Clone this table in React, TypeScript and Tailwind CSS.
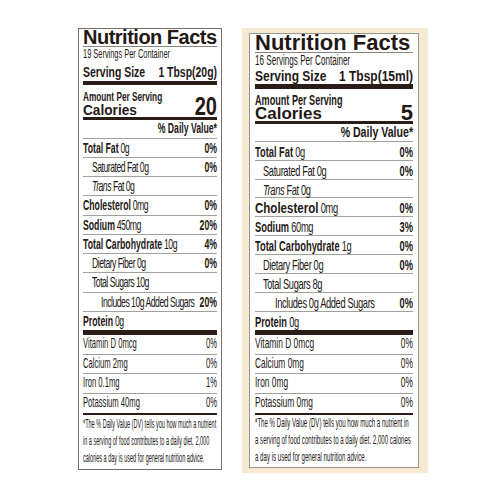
import type { ReactNode } from "react"

const FONT = "font-['Liberation_Sans',Arial,Helvetica,sans-serif]"

// widened box + horizontal squeeze, so Arial reads like a condensed face
const K = {
  s425: "w-[235.29%] scale-x-[0.425]",
  s47: "w-[212.77%] scale-x-[0.47]",
  s51: "w-[196.08%] scale-x-[0.51]",
  s55: "w-[181.82%] scale-x-[0.55]",
  s56: "w-[178.57%] scale-x-[0.56]",
  s58: "w-[172.41%] scale-x-[0.58]",
  s61: "w-[163.93%] scale-x-[0.61]",
  s62: "w-[161.29%] scale-x-[0.62]",
  s65: "w-[153.85%] scale-x-[0.65]",
  s72: "w-[138.89%] scale-x-[0.72]",
  s73: "w-[136.99%] scale-x-[0.73]",
  s80: "w-[125%] scale-x-[0.8]",
  s91: "w-[109.89%] scale-x-[0.91]",
  s106: "w-[94.34%] scale-x-[1.06]",
  one: "w-full",
}

type Row = {
  name: string
  amt?: string
  dv?: string
  bold?: boolean
  indent?: 0 | 1 | 2
  italic?: string
  nameCls?: string
}

type Cfg = {
  box: string
  title: string
  servings: string
  servingsK: string
  size: string
  sizeK: string
  bar1: string
  amount: string
  amountK: string
  cal: string
  calK: string
  num: string
  numK: string
  dv: string
  dvK: string
  row: string
  rowK: string
  reg: string
  in1: string
  in2: string
  vit: string
  vitK: string
  foot: string
  footK: string
}

function Sq({ k, className = "", children }: { k: string; className?: string; children: ReactNode }) {
  return (
    <div className={className}>
      <div className={`origin-left whitespace-nowrap ${k}`}>{children}</div>
    </div>
  )
}

function Label({
  c,
  servings,
  serving,
  calories,
  rows,
  vitamins,
  foot,
}: {
  c: Cfg
  servings: string
  serving: string
  calories: string
  rows: Row[]
  vitamins: [string, string][]
  foot: string[]
}) {
  return (
    <div className={`flex flex-col bg-white ${c.box}`}>
      <div className={`font-bold whitespace-nowrap ${c.title}`}>Nutrition Facts</div>
      <div className="h-px bg-[#8a8480]" />
      <Sq k={c.servingsK} className={c.servings}>
        {servings}
      </Sq>
      <Sq k={c.sizeK} className={`font-bold ${c.size}`}>
        <div className="flex justify-between">
          <span>Serving Size</span>
          <span>{serving}</span>
        </div>
      </Sq>
      <div className={`bg-[#2a1d18] ${c.bar1}`} />

      {/* amount per serving + calories */}
      <div className="flex h-[32px] items-end">
        <div className="min-w-0 flex-1 self-start">
          <Sq k={c.amountK} className={`font-bold ${c.amount}`}>
            Amount Per Serving
          </Sq>
          <Sq k={c.calK} className={`font-bold ${c.cal}`}>
            Calories
          </Sq>
        </div>
        <Sq k={c.numK} className={`shrink-0 text-right font-bold ${c.num}`}>
          {calories}
        </Sq>
      </div>
      <div className="h-[3px] bg-[#2a1d18]" />

      <Sq k={c.dvK} className={`text-right font-bold ${c.dv}`}>
        % Daily Value*
      </Sq>

      {rows.map((r) => (
        <Sq
          key={r.name}
          k={c.rowK}
          className={`border-t border-[#a39f9c] ${c.row} ${r.indent === 1 ? c.in1 : r.indent === 2 ? c.in2 : ""}`}
        >
          <div className="flex justify-between">
            <span>
              {r.italic && <span className={`italic ${c.reg}`}>{r.italic} </span>}
              {r.bold ? (
                <span className={`font-bold ${r.nameCls ?? ""}`}>{r.name}</span>
              ) : (
                <span className={c.reg}>{r.name}</span>
              )}
              {r.amt && <span className={c.reg}> {r.amt}</span>}
            </span>
            {r.dv && <span className="font-bold">{r.dv}</span>}
          </div>
        </Sq>
      ))}

      <div className="h-[5px] bg-[#2a1d18]" />
      {vitamins.map(([n, v], i) => (
        <Sq
          key={n}
          k={c.vitK}
          className={`${c.vit} ${i < vitamins.length - 1 ? "border-b border-[#a39f9c]" : ""}`}
        >
          <div className="flex justify-between">
            <span>{n}</span>
            <span>{v}</span>
          </div>
        </Sq>
      ))}
      <div className="h-[2px] bg-[#2a1d18]" />
      <Sq k={c.footK} className={`flex-1 ${c.foot}`}>
        {foot.map((l) => (
          <div key={l}>{l}</div>
        ))}
      </Sq>
    </div>
  )
}

const left: Cfg = {
  box: "h-[442px] w-[144px] border border-[#776e69] px-[4px]",
  title: "h-[17px] text-[20px] leading-[17px] tracking-[-0.5px]",
  servings: "h-[14px] text-[13.5px] leading-[14px]",
  servingsK: K.s55,
  size: "h-[20px] text-[14.5px] leading-[22px]",
  sizeK: K.s72,
  bar1: "h-[4px]",
  amount: "h-[20px] text-[13.5px] leading-[23px]",
  amountK: K.s61,
  cal: "h-[12px] text-[15px] leading-[10px]",
  calK: K.s91,
  num: "w-[25px] text-[25px] leading-[21px]",
  numK: K.s80,
  dv: "h-[17.5px] text-[14px] leading-[17.5px]",
  dvK: K.s62,
  row: "h-[19.25px] text-[15px] leading-[18.25px]",
  rowK: K.s58,
  reg: "tracking-[-0.9px]",
  in1: "pl-[9px]",
  in2: "pl-[18px]",
  vit: "h-[19.6px] text-[15px] leading-[15.5px]",
  vitK: K.s51,
  foot: "text-[13px] leading-[17px]",
  footK: K.s425,
}

const right: Cfg = {
  box: "h-[435px] w-[170px] border border-[#9a948e] px-[5px]",
  title: "h-[18px] text-[22px] leading-[18px]",
  servings: "h-[14px] text-[14px] leading-[14px]",
  servingsK: K.s58,
  size: "h-[17px] text-[15px] leading-[17.5px]",
  sizeK: K.s80,
  bar1: "h-[5px]",
  amount: "h-[20px] text-[14px] leading-[23px]",
  amountK: K.s65,
  cal: "h-[12px] text-[16px] leading-[10px]",
  calK: K.s106,
  num: "w-[14px] text-[22px] leading-[17px]",
  numK: K.one,
  dv: "h-[16.7px] text-[14.5px] leading-[16.7px]",
  dvK: K.s73,
  row: "h-[18.93px] text-[15px] leading-[20px]",
  rowK: K.s62,
  reg: "tracking-[-0.6px]",
  in1: "pl-[8px]",
  in2: "pl-[20px]",
  vit: "h-[19.6px] text-[15px] leading-[16px]",
  vitK: K.s56,
  foot: "text-[13px] leading-[16.7px]",
  footK: K.s47,
}

export default function App() {
  return (
    <div className={`flex h-[500px] w-[500px] items-start gap-[20px] bg-white pl-[78px] pt-[28px] text-[#231815] ${FONT}`}>
      <Label
        c={left}
        servings="19 Servings Per Container"
        serving="1 Tbsp(20g)"
        calories="20"
        rows={[
          { name: "Total Fat", amt: "0g", dv: "0%", bold: true },
          { name: "Saturated Fat 0g", dv: "0%", indent: 1 },
          { name: "Fat 0g", italic: "Trans", indent: 1 },
          { name: "Cholesterol", amt: "0mg", dv: "0%", bold: true },
          { name: "Sodium", amt: "450mg", dv: "20%", bold: true },
          { name: "Total Carbohydrate", amt: "10g", dv: "4%", bold: true },
          { name: "Dietary Fiber 0g", dv: "0%", indent: 1 },
          { name: "Total Sugars 10g", indent: 1 },
          { name: "Includes 10g Added Sugars", dv: "20%", indent: 2 },
          { name: "Protein", amt: "0g", bold: true },
        ]}
        vitamins={[
          ["Vitamin D 0mcg", "0%"],
          ["Calcium 2mg", "0%"],
          ["Iron 0.1mg", "1%"],
          ["Potassium 40mg", "0%"],
        ]}
        foot={[
          "*The % Daily Value (DV) tells you how much a nutrient",
          "in a serving of food contributes to a daily diet. 2,000",
          "calories a day is used for general nutrition advice.",
        ]}
      />

      <div className="h-[445px] w-[186px] bg-[#f6ead3] pl-[7px] pt-[5px]">
        <Label
          c={right}
          servings="16 Servings Per Container"
          serving="1 Tbsp(15ml)"
          calories="5"
          rows={[
            { name: "Total Fat", amt: "0g", dv: "0%", bold: true },
            { name: "Saturated Fat 0g", dv: "0%", indent: 1 },
            { name: "Fat 0g", italic: "Trans", indent: 1 },
            {
              name: "Cholesterol",
              amt: "0mg",
              dv: "0%",
              bold: true,
              nameCls: "inline-block origin-left scale-x-[1.24] mr-[20px]",
            },
            { name: "Sodium", amt: "60mg", dv: "3%", bold: true },
            { name: "Total Carbohydrate", amt: "1g", dv: "0%", bold: true },
            { name: "Dietary Fiber 0g", dv: "0%", indent: 1 },
            { name: "Total Sugars 8g", indent: 1 },
            { name: "Includes 0g Added Sugars", dv: "0%", indent: 2 },
            { name: "Protein", amt: "0g", bold: true },
          ]}
          vitamins={[
            ["Vitamin D 0mcg", "0%"],
            ["Calcium 0mg", "0%"],
            ["Iron 0mg", "0%"],
            ["Potassium 0mg", "0%"],
          ]}
          foot={[
            "*The % Daily Value (DV) tells you how much a nutrient in",
            "a serving of food contributes to a daily diet. 2,000 calories",
            "a day is used for general nutrition advice.",
          ]}
        />
      </div>
    </div>
  )
}
